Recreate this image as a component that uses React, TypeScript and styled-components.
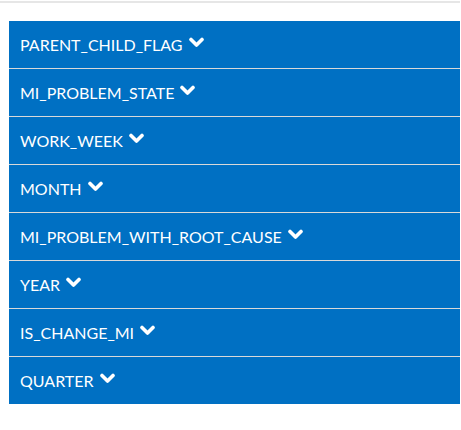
import React from "react";
import styled, { createGlobalStyle } from "styled-components";

const Global = createGlobalStyle`
  html, body { margin: 0; padding: 0; background: #fff; }
  body { font-family: Lato, "Open Sans", sans-serif; }
`;

const Page = styled.div`
  padding-top: 1px;
  width: 461px;
`;

const TopRule = styled.div`
  height: 2px;
  width: 460px;
  background: #e6e6e6;
`;

const List = styled.ul`
  list-style: none;
  margin: 18px 0 0 9px;
  padding: 0;
  width: 451px;
  background: #0070c3;
`;

const Item = styled.li`
  height: 47px;
  display: flex;
  align-items: center;
  gap: 6px;
  padding-left: 11px;
  color: #fff;
  font-size: 16px;
  & + & {
    border-top: 1px solid #d9d9d9;
  }
`;

const ChevronSvg = styled.svg`
  width: 15px;
  height: 11px;
  margin-top: -4px;
  flex: none;
`;

const Chevron = () => (
  <ChevronSvg viewBox="0 0 15 11">
    <polyline
      points="2,2.5 7.5,8 13,2.5"
      fill="none"
      stroke="#fff"
      strokeWidth="3.6"
      strokeLinecap="round"
      strokeLinejoin="round"
    />
  </ChevronSvg>
);

const fields = [
  "PARENT_CHILD_FLAG",
  "MI_PROBLEM_STATE",
  "WORK_WEEK",
  "MONTH",
  "MI_PROBLEM_WITH_ROOT_CAUSE",
  "YEAR",
  "IS_CHANGE_MI",
  "QUARTER",
];

export default function App() {
  return (
    <>
      <Global />
      <Page>
        <TopRule />
        <List>
          {fields.map((f) => (
            <Item key={f}>
              {f}
              <Chevron />
            </Item>
          ))}
        </List>
      </Page>
    </>
  );
}
